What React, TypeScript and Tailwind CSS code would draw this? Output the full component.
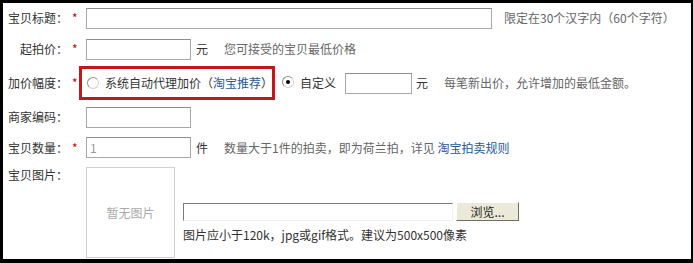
import React from "react";

function Radio({ checked }: { checked?: boolean }) {
  return (
    <span className="relative inline-block h-[12px] w-[12px] shrink-0 rounded-full border border-[#8e8f8f] border-b-[#d4d4d4] border-r-[#d4d4d4] bg-white">
      {checked && <span className="absolute left-[3px] top-[3px] h-[4px] w-[4px] rounded-full bg-black" />}
    </span>
  );
}

function Label({ text, required }: { text: string; required?: boolean }) {
  return (
    <>
      <span className="w-[65px] shrink-0 text-right text-[#333]">{text}</span>
      <span className="w-[18px] shrink-0 pl-[4px] text-[#c00]">{required ? "*" : ""}</span>
    </>
  );
}

const input = "h-[21px] border border-[#a9a9a9] border-t-[#8d8d8d] bg-white";

export default function App() {
  return (
    <div className="h-[263px] w-[693px] border-b-[4px] border-l-[3px] border-r-[2px] border-t-[3px] border-black bg-white font-['Noto_Sans_CJK_SC','Liberation_Sans',sans-serif] text-[12px] leading-[16px]">
      {/* 宝贝标题 */}
      <div className="flex h-[30px] items-center">
        <Label text="宝贝标题：" required />
        <div className={`${input} w-[406px]`} />
        <span className="ml-[12px] text-[#666]">限定在30个汉字内（60个字符）</span>
      </div>

      {/* 起拍价 */}
      <div className="flex h-[32px] items-center">
        <Label text="起拍价：" required />
        <div className={`${input} w-[105px]`} />
        <span className="ml-[5px] text-[#333]">元</span>
        <span className="ml-[16px] text-[#666]">您可接受的宝贝最低价格</span>
      </div>

      {/* 加价幅度 */}
      <div className="flex h-[36px] items-center">
        <Label text="加价幅度：" required />
        <div className="-ml-[7px] flex h-[34px] w-[196px] items-center border-[3px] border-[#c4161c] pl-[5px]">
          <Radio />
          <span className="ml-[6px] whitespace-nowrap text-[#333]">
            系统自动代理加价（<span className="text-[#245a9c]">淘宝推荐</span>）
          </span>
        </div>
        <span className="ml-[7px]">
          <Radio checked />
        </span>
        <span className="ml-[6px] text-[#333]">自定义</span>
        <div className={`${input} ml-[9px] w-[67px]`} />
        <span className="ml-[4px] text-[#333]">元</span>
        <span className="ml-[16px] text-[#666]">每笔新出价，允许增加的最低金额。</span>
      </div>

      {/* 商家编码 */}
      <div className="flex h-[32px] items-center">
        <Label text="商家编码：" />
        <div className={`${input} w-[105px]`} />
      </div>

      {/* 宝贝数量 */}
      <div className="flex h-[29px] items-center">
        <Label text="宝贝数量：" required />
        <div className={`${input} flex w-[105px] items-center pl-[3px] text-[#999]`}>1</div>
        <span className="ml-[5px] text-[#333]">件</span>
        <span className="ml-[16px] text-[#666]">
          数量大于1件的拍卖，即为荷兰拍，详见 <span className="text-[#245a9c]">淘宝拍卖规则</span>
        </span>
      </div>

      {/* 宝贝图片 */}
      <div className="flex items-start pt-[5px]">
        <Label text="宝贝图片：" />
        <div className="flex h-[91px] w-[89px] shrink-0 items-center justify-center border border-[#d0d0d0] text-[#aaa]">
          暂无图片
        </div>
        <div className="ml-[8px] flex flex-col pt-[35px]">
          <div className="flex items-center">
            <div className="h-[18px] w-[270px] border border-[#f0f0f0] border-l-[#7a7a7a] border-t-[#7a7a7a] bg-white" />
            <div className="ml-[3px] flex h-[19px] w-[63px] items-center justify-center border border-[#fff] border-b-[#716f64] border-r-[#716f64] bg-[#ece9d8] text-[#222]">
              浏览...
            </div>
          </div>
          <span className="mt-[6px] text-[#333]">图片应小于120k，jpg或gif格式。建议为500x500像素</span>
        </div>
      </div>
    </div>
  );
}
